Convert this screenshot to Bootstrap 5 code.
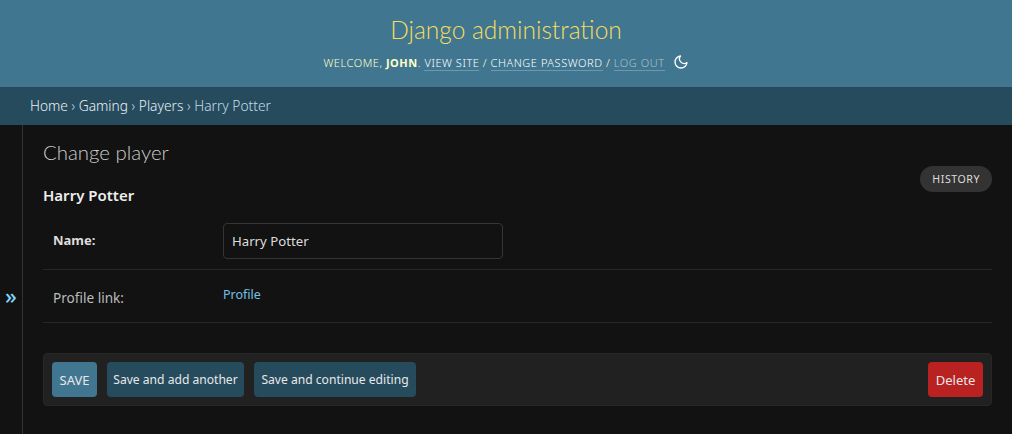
<!DOCTYPE html>
<html lang="en">
<head>
<meta charset="utf-8">
<title>Change player</title>
<link href="https://cdn.jsdelivr.net/npm/bootstrap@5.3.0/dist/css/bootstrap.min.css" rel="stylesheet">
<style>
html, body { height: 100%; }
body { background: #121212; color: #eee; font-family: "Noto Sans", sans-serif; font-size: 14px; overflow: hidden; }
.adm-header { background: #417690; height: 87px; padding-top: 13px; color: #ffc; }
.adm-brand { font-family: "Lato", sans-serif; font-size: 24.5px; font-weight: 300; line-height: 34px; color: #f5dd5d; margin: 0 0 7px; }
.adm-tools { font-size: 11px; letter-spacing: .55px; line-height: 16px; text-transform: uppercase; font-weight: 300; }
.adm-tools strong { font-weight: 700; }
.adm-tools a { color: #fff; text-decoration: none; border-bottom: 1px solid rgba(255,255,255,.25); }
.adm-tools a.adm-logout { color: rgba(255,255,255,.55); }
.adm-moon { margin-left: 8px; vertical-align: -3px; }
.adm-crumbs { background: #264b5d; height: 38px; padding: 0 30px; line-height: 37px; color: #c4dce8; font-size: 13.75px; font-weight: 300; }
.adm-crumbs a { color: #e6f0f5; text-decoration: none; }
.adm-main { height: calc(100% - 125px); }
.adm-toggle { width: 23px; flex: none; border-right: 1px solid #333; color: #81d4fa; font-size: 22px; font-weight: 500; padding-top: 31px; line-height: 1; }
.adm-content { padding: 15px 20px 0; min-width: 0; }
.adm-title { font-family: "Lato", sans-serif; font-size: 20.4px; font-weight: 300; line-height: 24px; color: #ccc; margin: 0 0 21px; }
.adm-history { background: #333; color: #ddd; font-size: 10.6px; letter-spacing: .55px; height: 26px; line-height: 26px; padding: 0 12px; border-radius: 15px; text-decoration: none; margin-top: 26px; }
.adm-objname { font-size: 15px; font-weight: 600; line-height: 20px; color: #eee; margin: 0 0 8px; }
.adm-fieldrow { border-bottom: 1px solid #272727; padding: 10px 10px; }
.adm-label { width: 170px; flex: none; }
.adm-label-strong { font-size: 13px; font-weight: 700; color: #ddd; margin-bottom: 0; }
.adm-label-plain { color: #bbb; font-size: 13.6px; line-height: 20px; padding-top: 10px; }
.adm-input { width: 280px; height: 36px; background: #121212; color: #ddd; border: 1px solid #353535; border-radius: 4px; padding: 0 8px; font-size: 13.2px; }
.adm-input:focus { background: #121212; color: #ddd; }
.adm-linkrow { height: 53px; padding-top: 8px; }
.adm-linkval { color: #74c0e8; font-size: 12.5px; text-decoration: none; line-height: 16px; margin-top: 9px; align-self: flex-start; }
.adm-submit { background: #212121; border: 1px solid #272727; border-radius: 4px; padding: 8px; height: 53px; margin-top: 30px; gap: 10px; }
.adm-btn { height: 35px; border: 0; border-radius: 4px; color: #e8e8e8; font-size: 12.1px; padding: 1px 0 0; background: #264b5d; line-height: 34px; }
.adm-btn:hover { color: #e8e8e8; background: #264b5d; }
.adm-btn-main { background: #417690; width: 45px; font-size: 13px; }
.adm-btn-main:hover { background: #417690; }
.adm-btn-add { width: 137px; }
.adm-btn-cont { width: 162px; }
.adm-btn-del { background: #ba2121; font-size: 13px; width: 55px; }
.adm-btn-del:hover { background: #ba2121; }
</style>
</head>
<body>
<header class="adm-header text-center">
  <h1 class="adm-brand">Django administration</h1>
  <div class="adm-tools">Welcome, <strong>John</strong>. <a href="#">View site</a> / <a href="#">Change password</a> / <a class="adm-logout" href="#">Log out</a><svg class="adm-moon" width="16" height="16" viewBox="0 0 24 24" fill="none" stroke="#fff" stroke-width="2" stroke-linecap="round" stroke-linejoin="round" aria-hidden="true"><path d="M21 12.8A9 9 0 1 1 11.2 3a7 7 0 0 0 9.8 9.8z"/></svg></div>
</header>
<nav class="adm-crumbs"><a href="#">Home</a> › <a href="#">Gaming</a> › <a href="#">Players</a> › Harry Potter</nav>
<div class="adm-main d-flex">
  <div class="adm-toggle d-flex align-items-center justify-content-center">»</div>
  <main class="adm-content flex-grow-1">
    <div class="d-flex justify-content-between align-items-start">
      <div>
        <h2 class="adm-title">Change player</h2>
        <h3 class="adm-objname">Harry Potter</h3>
      </div>
      <a class="adm-history" href="#">HISTORY</a>
    </div>
    <form>
      <div class="adm-fieldrow d-flex align-items-center">
        <label class="adm-label adm-label-strong" for="n">Name:</label>
        <input id="n" class="adm-input form-control" value="Harry Potter">
      </div>
      <div class="adm-fieldrow adm-linkrow d-flex">
        <div class="adm-label adm-label-plain">Profile link:</div>
        <a class="adm-linkval" href="#">Profile</a>
      </div>
      <div class="adm-submit d-flex align-items-center">
        <button type="button" class="btn adm-btn adm-btn-main">SAVE</button>
        <button type="button" class="btn adm-btn adm-btn-add">Save and add another</button>
        <button type="button" class="btn adm-btn adm-btn-cont">Save and continue editing</button>
        <button type="button" class="btn adm-btn adm-btn-del ms-auto">Delete</button>
      </div>
    </form>
  </main>
</div>
</body>
</html>
